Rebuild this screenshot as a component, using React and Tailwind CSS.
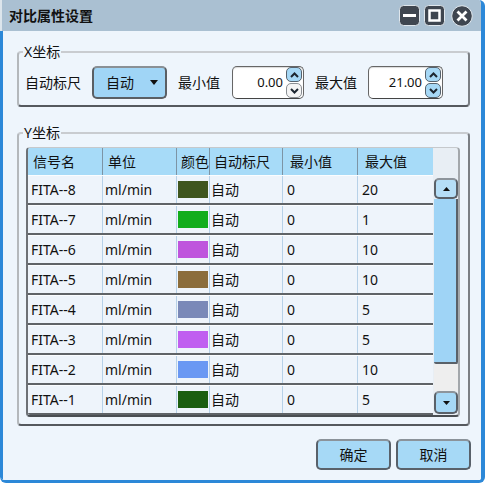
import React from 'react';

const rows = [
  { name: 'FITA--8', color: '#3f561f', max: '20' },
  { name: 'FITA--7', color: '#12ad1c', max: '1' },
  { name: 'FITA--6', color: '#bf55dd', max: '10' },
  { name: 'FITA--5', color: '#8b6d3c', max: '10' },
  { name: 'FITA--4', color: '#7a89b8', max: '5' },
  { name: 'FITA--3', color: '#c05ff0', max: '5' },
  { name: 'FITA--2', color: '#6a98f3', max: '10' },
  { name: 'FITA--1', color: '#1b5e10', max: '5' },
];

function Chevron({ up }) {
  return (
    <svg width="9" height="6" viewBox="0 0 9 6">
      <path d={up ? 'M1 5 L4.5 1.5 L8 5' : 'M1 1 L4.5 4.5 L8 1'} stroke="#1c2630" strokeWidth="2" fill="none" />
    </svg>
  );
}

function Spinner({ downWhite }) {
  return (
    <div className="flex flex-col gap-[1px]">
      <div className="w-[16px] h-[15px] rounded-[5px] border border-[#56626d] bg-[#a6d8f6] flex items-center justify-center">
        <Chevron up />
      </div>
      <div
        className={
          downWhite
            ? 'w-[16px] h-[15px] rounded-[5px] border border-[#8a8f94] bg-[#f4f4f4] flex items-center justify-center'
            : 'w-[16px] h-[15px] rounded-[5px] border border-[#56626d] bg-[#a6d8f6] flex items-center justify-center'
        }
      >
        <Chevron />
      </div>
    </div>
  );
}

function NumberBox({ value, width, downWhite }) {
  return (
    <div className={`${width} h-[33px] border border-[#666] border-b-[#444] rounded-[5px] bg-white flex items-center justify-end pr-[1px] shadow-[inset_0_1px_1px_rgba(0,0,0,0.15)]`}>
      <span className="text-[13px] mr-[3px]">{value}</span>
      <Spinner downWhite={downWhite} />
    </div>
  );
}

function WinIcons() {
  return (
    <div className="flex items-center gap-[4px]">
      <svg width="21" height="21" viewBox="0 0 21 21">
        <rect x="0.5" y="0.5" width="20" height="20" rx="4" fill="#3f4650" stroke="#dfe6ec" />
        <rect x="4" y="9" width="13" height="3" fill="#fff" />
      </svg>
      <svg width="21" height="21" viewBox="0 0 21 21">
        <rect x="0.5" y="0.5" width="20" height="20" rx="4" fill="#3f4650" stroke="#dfe6ec" />
        <rect x="5.5" y="5.5" width="10" height="10" fill="none" stroke="#fff" strokeWidth="2.5" />
      </svg>
      <svg width="22" height="22" viewBox="0 0 22 22" className="ml-[2px]">
        <circle cx="11" cy="11" r="10.3" fill="#3f4650" stroke="#dfe6ec" />
        <path d="M6.5 6.5 L15.5 15.5 M15.5 6.5 L6.5 15.5" stroke="#fff" strokeWidth="2.8" />
      </svg>
    </div>
  );
}

export default function App() {
  return (
    <div className="w-[485px] h-[484px] bg-white font-['Noto_Sans','Noto_Sans_CJK_SC',sans-serif] text-[14px] text-[#111] whitespace-nowrap">
      <div className="h-[483px] flex flex-col border-r-[4px] border-b-[3px] border-[#2c88d8] rounded-tr-[6px] rounded-b-[6px] overflow-hidden">
        <div className="h-[31px] shrink-0 bg-[#aac0d2] flex items-center justify-between pl-[7px] pr-[8px] border-l-[2px] border-l-[#dce5ec]">
          <span className="font-bold text-[14px]">对比属性设置</span>
          <WinIcons />
        </div>
        <div className="flex-1 bg-[#eef5fc] border-l-[3px] border-[#2c88d8] flex flex-col pl-[14px] pr-[11px]">
          <fieldset className="mt-[11px] border-2 border-t-[#c9ccd0] border-l-[#b4b8bc] border-r-[#7b7f84] border-b-[#55595e] rounded-[4px]">
            <legend className="ml-[4px] px-[1px] leading-[20px]">X坐标</legend>
            <div className="flex items-center pl-[6px] pt-[4px] pb-[6px]">
              <span>自动标尺</span>
              <div className="ml-[11px] w-[75px] h-[33px] border-2 border-[#5a5f64] border-t-[#8a9095] rounded-[5px] bg-[#a0d5f6] flex items-center justify-between pl-[12px] pr-[7px]">
                <span>自动</span>
                <svg width="8" height="5" viewBox="0 0 8 5">
                  <path d="M0 0 L8 0 L4 5 Z" fill="#111" />
                </svg>
              </div>
              <span className="ml-[11px]">最小值</span>
              <div className="ml-[12px]">
                <NumberBox value="0.00" width="w-[72px]" downWhite />
              </div>
              <span className="ml-[11px]">最大值</span>
              <div className="ml-[11px]">
                <NumberBox value="21.00" width="w-[75px]" />
              </div>
            </div>
          </fieldset>

          <fieldset className="mt-[16px] border-2 border-t-[#c9ccd0] border-l-[#b4b8bc] border-r-[#7b7f84] border-b-[#55595e] rounded-[4px]">
            <legend className="ml-[4px] px-[1px] leading-[20px]">Y坐标</legend>
            <div className="pl-[7px] pr-[5px] pt-[4px] pb-[7px]">
              <div className="w-[434px] h-[270px] flex border-[2px] border-t-[1px] border-t-[#c6c9cc] border-l-[#6d7176] border-r-[#a3a7ab] border-b-[#4a4e52] rounded-[4px] bg-[#e8eef4] overflow-hidden">
                <div className="w-[405px] flex flex-col">
                  <div className="h-[27px] flex bg-[#a7dbf8]">
                    <div className="w-[75px] pl-[5px] flex items-center border-r border-[#7d94a5]">信号名</div>
                    <div className="w-[74px] pl-[5px] flex items-center border-r border-[#7d94a5]">单位</div>
                    <div className="w-[33px] pl-[4px] flex items-center border-r border-[#7d94a5] overflow-visible">颜色</div>
                    <div className="w-[73px] pl-[4px] flex items-center border-r border-[#7d94a5]">自动标尺</div>
                    <div className="w-[75px] pl-[7px] flex items-center border-r border-[#7d94a5]">最小值</div>
                    <div className="w-[75px] pl-[7px] flex items-center">最大值</div>
                  </div>
                  {rows.map((r) => (
                    <div key={r.name} className="h-[30px] flex bg-[#eef4fb] border-b-2 border-[#5f6367] border-t border-t-[#fbfdff]">
                      <div className="w-[75px] pl-[3px] flex items-center border-r border-[#b7d1e8]">{r.name}</div>
                      <div className="w-[74px] pl-[2px] flex items-center border-r border-[#b7d1e8]">ml/min</div>
                      <div className="w-[33px] pl-[1px] flex items-center border-r border-[#b7d1e8]">
                        <div className="w-[30px] h-[17px]" style={{ backgroundColor: r.color }} />
                      </div>
                      <div className="w-[73px] pl-[1px] flex items-center border-r border-[#b7d1e8]">自动</div>
                      <div className="w-[75px] pl-[4px] flex items-center border-r border-[#b7d1e8]">0</div>
                      <div className="w-[75px] pl-[4px] flex items-center">{r.max}</div>
                    </div>
                  ))}
                </div>
                <div className="flex-1 flex flex-col pt-[30px] pl-[1px]">
                  <div className="w-[24px] h-[21px] rounded-[5px] border-2 border-[#5a6169] border-t-[#8d949b] bg-[#b5def7] flex items-center justify-center">
                    <svg width="7" height="4" viewBox="0 0 7 4"><path d="M0 4 L7 4 L3.5 0 Z" fill="#111" /></svg>
                  </div>
                  <div className="w-[24px] h-[165px] bg-[#9fd4f6] border-r-2 border-b-2 border-[#5a6169] rounded-b-[2px]" />
                  <div className="w-[24px] h-[27px] bg-[#eeeeee]" />
                  <div className="w-[24px] h-[23px] rounded-[5px] border-2 border-[#5a6169] border-t-[#8d949b] bg-[#a6d8f6] flex items-center justify-center">
                    <svg width="7" height="4" viewBox="0 0 7 4"><path d="M0 0 L7 0 L3.5 4 Z" fill="#111" /></svg>
                  </div>
                </div>
              </div>
            </div>
          </fieldset>

          <div className="mt-[13px] flex justify-end gap-[5px] mr-[-1px]">
            <div className="w-[75px] h-[31px] rounded-[5px] border-2 border-[#59616a] border-t-[#8b939a] bg-[#a6d9f6] flex items-center justify-center">确定</div>
            <div className="w-[75px] h-[31px] rounded-[5px] border-2 border-[#59616a] border-t-[#8b939a] bg-[#a6d9f6] flex items-center justify-center">取消</div>
          </div>
        </div>
      </div>
    </div>
  );
}
